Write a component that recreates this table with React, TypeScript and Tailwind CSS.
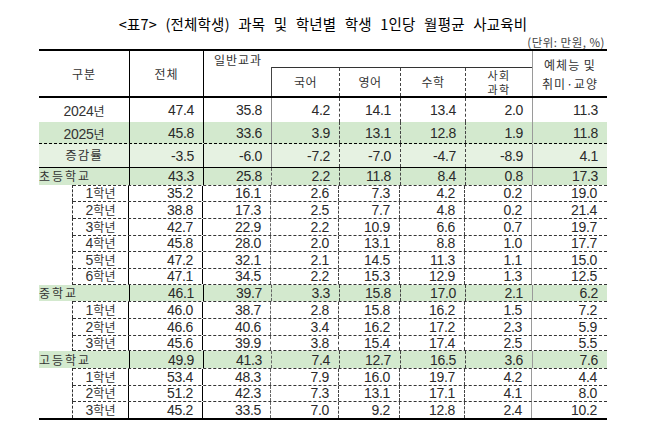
import React from "react";

const KR = "font-['Noto_Sans_CJK_KR','Noto_Sans',sans-serif]";
const NUM = "font-['Liberation_Sans','Arial',sans-serif]";

type Row = { label: string; v: string[] };

const summary: Row[] = [
  { label: "2024", v: ["47.4", "35.8", "4.2", "14.1", "13.4", "2.0", "11.3"] },
  { label: "2025", v: ["45.8", "33.6", "3.9", "13.1", "12.8", "1.9", "11.8"] },
  { label: "증감률", v: ["-3.5", "-6.0", "-7.2", "-7.0", "-4.7", "-8.9", "4.1"] },
];

const groups: { name: string; total: string[]; grades: string[][] }[] = [
  {
    name: "초등학교",
    total: ["43.3", "25.8", "2.2", "11.8", "8.4", "0.8", "17.3"],
    grades: [
      ["35.2", "16.1", "2.6", "7.3", "4.2", "0.2", "19.0"],
      ["38.8", "17.3", "2.5", "7.7", "4.8", "0.2", "21.4"],
      ["42.7", "22.9", "2.2", "10.9", "6.6", "0.7", "19.7"],
      ["45.8", "28.0", "2.0", "13.1", "8.8", "1.0", "17.7"],
      ["47.2", "32.1", "2.1", "14.5", "11.3", "1.1", "15.0"],
      ["47.1", "34.5", "2.2", "15.3", "12.9", "1.3", "12.5"],
    ],
  },
  {
    name: "중학교",
    total: ["46.1", "39.7", "3.3", "15.8", "17.0", "2.1", "6.2"],
    grades: [
      ["46.0", "38.7", "2.8", "15.8", "16.2", "1.5", "7.2"],
      ["46.6", "40.6", "3.4", "16.2", "17.2", "2.3", "5.9"],
      ["45.6", "39.9", "3.8", "15.4", "17.4", "2.5", "5.5"],
    ],
  },
  {
    name: "고등학교",
    total: ["49.9", "41.3", "7.4", "12.7", "16.5", "3.6", "7.6"],
    grades: [
      ["53.4", "48.3", "7.9", "16.0", "19.7", "4.2", "4.4"],
      ["51.2", "42.3", "7.3", "13.1", "17.1", "4.1", "8.0"],
      ["45.2", "33.5", "7.0", "9.2", "12.8", "2.4", "10.2"],
    ],
  },
];

const colSum = [
  "w-[74px] border-r border-black",
  "w-[68px] border-r border-[#8c8c8c]",
  "w-[68px] border-r border-dashed border-[#444]",
  "w-[61px] border-r border-dashed border-[#444]",
  "w-[65px] border-r border-dashed border-[#444]",
  "w-[67px] border-r border-[#9a9a9a]",
  "w-[74px]",
];

const colBody = [
  "w-[74px] border-r border-black",
  "w-[68px] border-r border-dashed border-[#666]",
  "w-[68px] border-r border-dashed border-[#444]",
  "w-[61px] border-r border-dashed border-[#444]",
  "w-[65px] border-r border-dashed border-[#444]",
  "w-[67px] border-r border-[#9a9a9a]",
  "w-[74px]",
];

function Nums({ v, cols }: { v: string[]; cols: string[] }) {
  return (
    <>
      {v.map((x, i) => (
        <div
          key={i}
          className={`${cols[i]} h-full flex items-center justify-end pr-[9px] ${NUM} text-[14px] leading-none text-[#2a2a2a] tracking-[-0.3px]`}
        >
          {x}
        </div>
      ))}
    </>
  );
}

function YearLabel({ label }: { label: string }) {
  if (label === "증감률")
    return <span className={`${KR} text-[12.5px] tracking-[1px] text-[#333]`}>{label}</span>;
  return (
    <span className="text-[#333] leading-none">
      <span className={`${NUM} text-[14px] tracking-[-0.3px]`}>{label}</span>
      <span className={`${KR} text-[12px]`}>년</span>
    </span>
  );
}

export default function App() {
  return (
    <div className="w-[658px] h-[429px] bg-white overflow-hidden pl-[39px] pt-[15px]">
      <div className="w-[568px]">
        {/* Title */}
        <div className={`h-[18px] leading-[18px] text-center text-[14.5px] font-normal tracking-[0.2px] text-black ${KR} [word-spacing:5px]`}>
          &lt;표7&gt; (전체학생) 과목 및 학년별 학생 1인당 월평균 사교육비
        </div>
        <div className={`h-[16px] pt-[2px] leading-[14px] text-right text-[11.5px] text-[#444] ${KR} pr-[2px] tracking-[0.5px]`}>
          (단위: 만원, %)
        </div>

        {/* Table */}
        <div className="border-t-2 border-b-2 border-black">
          {/* Header */}
          <div className={`flex h-[47px] border-b-2 border-black ${KR} text-[12px] text-[#333]`}>
            <div className="w-[91px] border-r border-black flex items-center justify-center tracking-[1px]">
              구분
            </div>
            <div className="w-[74px] border-r border-black flex items-center justify-center tracking-[1px]">
              전체
            </div>
            <div className="w-[329px] border-r border-[#9a9a9a] flex flex-col">
              <div className="h-[16px] flex">
                <div className="w-[68px] text-center leading-[18px] tracking-[1px]">일반교과</div>
              </div>
              <div className="flex-1 flex">
                <div className="w-[68px] border-r border-[#444]" />
                <div className="flex-1 flex border-t border-[#333]">
                  <div className="w-[68px] border-r border-dashed border-[#444] flex items-center justify-center tracking-[0.5px]">
                    국어
                  </div>
                  <div className="w-[61px] border-r border-dashed border-[#444] flex items-center justify-center tracking-[0.5px]">
                    영어
                  </div>
                  <div className="w-[65px] border-r border-dashed border-[#444] flex items-center justify-center tracking-[0.5px]">
                    수학
                  </div>
                  <div className="flex-1 flex flex-col items-center justify-center leading-[14px] text-[11px] tracking-[1.5px]">
                    <span>사회</span>
                    <span>과학</span>
                  </div>
                </div>
              </div>
            </div>
            <div className="w-[74px] flex flex-col items-center justify-center leading-[19px] tracking-[1px]">
              <span>예체능 및</span>
              <span>취미·교양</span>
            </div>
          </div>

          {/* Summary rows */}
          <div className="flex h-[24px]">
            <div className="w-[91px] border-r border-black flex items-center justify-center">
              <YearLabel label={summary[0].label} />
            </div>
            <Nums v={summary[0].v} cols={colSum} />
          </div>
          <div className="flex h-[22px] bg-[#d3e9ce] border-b border-dashed border-black">
            <div className="w-[91px] border-r border-black flex items-center justify-center">
              <YearLabel label={summary[1].label} />
            </div>
            <Nums v={summary[1].v} cols={colSum} />
          </div>
          <div className="flex h-[24px] bg-[#e6f2e2] border-b border-black">
            <div className="w-[91px] border-r border-black flex items-center justify-center">
              <YearLabel label={summary[2].label} />
            </div>
            <Nums v={summary[2].v} cols={colSum} />
          </div>

          {/* Groups */}
          {groups.map((g, gi) => (
            <div key={g.name}>
              <div className="flex h-[16.667px] bg-[#d3e9ce]">
                <div className={`w-[91px] border-r border-black flex items-center ${KR} text-[12px] tracking-[2px] text-[#333] leading-none`}>
                  {g.name}
                </div>
                <Nums v={g.total} cols={colBody} />
              </div>
              {g.grades.map((r, ri) => {
                const lastBeforeSection = ri === g.grades.length - 1 && gi < groups.length - 1;
                return (
                  <div key={ri} className="flex h-[16.667px]">
                    <div className="w-[34px] border-r border-dashed border-[#333]" />
                    <div
                      className={`flex w-[534px] border-t border-dashed border-[#333] ${
                        lastBeforeSection ? "border-b" : ""
                      }`}
                    >
                      <div className="w-[56px] border-r border-black flex items-center justify-center leading-none text-[#333]">
                        <span className={`${NUM} text-[14px]`}>{ri + 1}</span>
                        <span className={`${KR} text-[12px]`}>학년</span>
                      </div>
                      <Nums v={r} cols={colBody} />
                    </div>
                  </div>
                );
              })}
            </div>
          ))}
        </div>
      </div>
    </div>
  );
}
